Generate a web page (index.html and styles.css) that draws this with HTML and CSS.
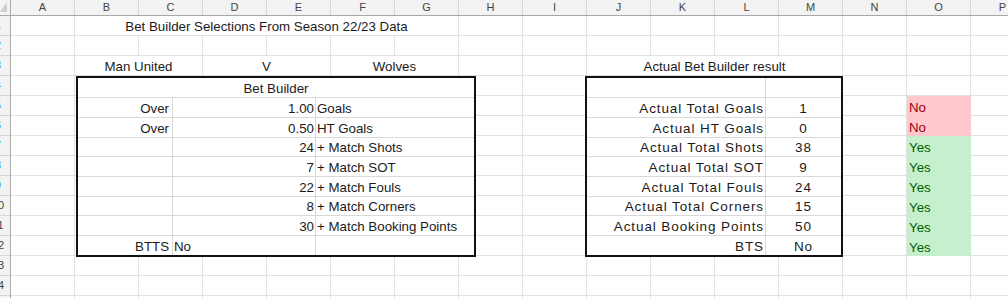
FILE: index.html
```html
<!DOCTYPE html>
<html>
<head>
<meta charset="utf-8">
<title>Bet Builder</title>
<link rel="stylesheet" href="styles.css">
</head>
<body>
<div class="sheet">
  <div class="corner"><svg width="10" height="15" viewBox="0 0 10 15"><polygon points="0,12 7,12 7,2" fill="#cfcfcf"/></svg></div>
  <div class="colheads">
    <div class="ch">A</div><div class="ch">B</div><div class="ch">C</div><div class="ch">D</div>
    <div class="ch">E</div><div class="ch">F</div><div class="ch">G</div><div class="ch">H</div>
    <div class="ch">I</div><div class="ch">J</div><div class="ch">K</div><div class="ch">L</div>
    <div class="ch">M</div><div class="ch">N</div><div class="ch">O</div><div class="ch">P</div>
  </div>
  <div class="rowheads">
    <div class="rh blue"><span>1</span></div>
    <div class="rh blue"><span>2</span></div>
    <div class="rh blue"><span>3</span></div>
    <div class="rh blue"><span>4</span></div>
    <div class="rh blue"><span>5</span></div>
    <div class="rh blue"><span>6</span></div>
    <div class="rh blue"><span>7</span></div>
    <div class="rh blue"><span>8</span></div>
    <div class="rh blue"><span>9</span></div>
    <div class="rh"><span>10</span></div>
    <div class="rh"><span>11</span></div>
    <div class="rh"><span>12</span></div>
    <div class="rh"><span>13</span></div>
    <div class="rh"><span>14</span></div>
  </div>
  <div class="cells">
    <div class="cell merge title">Bet Builder Selections From Season 22/23 Data</div>
    <div class="cell merge home">Man United</div>
    <div class="cell merge vs">V</div>
    <div class="cell merge away">Wolves</div>
    <div class="cell merge acthead">Actual Bet Builder result</div>

    <div class="box box1">
      <div class="b span3">Bet Builder</div>
      <div class="b lab">Over</div><div class="b num">1.00</div><div class="b txt">Goals</div>
      <div class="b lab">Over</div><div class="b num">0.50</div><div class="b txt">HT Goals</div>
      <div class="b lab"></div><div class="b num">24</div><div class="b txt">+ Match Shots</div>
      <div class="b lab"></div><div class="b num">7</div><div class="b txt">+ Match SOT</div>
      <div class="b lab"></div><div class="b num">22</div><div class="b txt">+ Match Fouls</div>
      <div class="b lab"></div><div class="b num">8</div><div class="b txt">+ Match Corners</div>
      <div class="b lab"></div><div class="b num">30</div><div class="b txt">+ Match Booking Points</div>
      <div class="b lab">BTTS</div><div class="b txt">No</div><div class="b txt"></div>
    </div>

    <div class="box box2">
      <div class="b alab"></div><div class="b aval"></div>
      <div class="b alab">Actual Total Goals</div><div class="b aval">1</div>
      <div class="b alab">Actual HT Goals</div><div class="b aval">0</div>
      <div class="b alab">Actual Total Shots</div><div class="b aval">38</div>
      <div class="b alab">Actual Total SOT</div><div class="b aval">9</div>
      <div class="b alab">Actual Total Fouls</div><div class="b aval">24</div>
      <div class="b alab">Actual Total Corners</div><div class="b aval">15</div>
      <div class="b alab">Actual Booking Points</div><div class="b aval">50</div>
      <div class="b alab">BTS</div><div class="b aval">No</div>
    </div>

    <div class="flags">
      <div class="flag no">No</div>
      <div class="flag no">No</div>
      <div class="flag yes">Yes</div>
      <div class="flag yes">Yes</div>
      <div class="flag yes">Yes</div>
      <div class="flag yes">Yes</div>
      <div class="flag yes">Yes</div>
      <div class="flag yes">Yes</div>
    </div>
  </div>
</div>
</body>
</html>
```

FILE: styles.css
```css
* { box-sizing: border-box; }
html, body { margin: 0; padding: 0; background: #fff; overflow: hidden; }
body {
  width: 1008px;
  height: 298px;
  font-family: "Liberation Sans", Arial, sans-serif;
  color: #1b1b1b;
}
.sheet {
  display: grid;
  grid-template-columns: 11px 997px;
  grid-template-rows: 16px 282px;
  overflow: hidden;
}
.corner {
  background: #f3f3f3;
  border-right: 1px solid #a8a8a8;
  border-bottom: 1px solid #a8a8a8;
}
.corner svg { display: block; }
.colheads {
  display: flex;
  background: #f3f3f3;
  border-bottom: 1px solid #a8a8a8;
  overflow: hidden;
}
.ch {
  flex: 0 0 64px;
  border-right: 1px solid #d6d6d6;
  text-align: center;
  font-size: 11px;
  line-height: 15px;
  color: #444;
}
.rowheads {
  display: flex;
  flex-direction: column;
  background: #f3f3f3;
  border-right: 1px solid #a8a8a8;
  overflow: hidden;
}
.rh {
  flex: 0 0 20px;
  border-bottom: 1px solid #d6d6d6;
  overflow: hidden;
  font-size: 11px;
  line-height: 19px;
  color: #444;
}
.rh span {
  display: block;
  width: 30px;
  margin-left: -17px;
  text-align: center;
}
.rh.blue { color: #4b9be0; }

.cells {
  display: grid;
  grid-template-columns: repeat(16, 64px);
  grid-template-rows: repeat(14, 20px) 2px;
  overflow: hidden;
  background-image:
    linear-gradient(to left, #e1e1e1 1px, transparent 1px),
    linear-gradient(to top, #e1e1e1 1px, transparent 1px);
  background-size: 64px 100%, 100% 20px;
  font-size: 13.3px;
}
.cell {
  display: flex;
  align-items: flex-end;
  padding-bottom: 1px;
  line-height: 15px;
  white-space: nowrap;
}
.merge {
  background: #fff;
  border-right: 1px solid #e1e1e1;
  border-bottom: 1px solid #e1e1e1;
  justify-content: center;
}
.title { grid-column: 2 / 8; grid-row: 1; }
.home { grid-column: 2 / 4; grid-row: 3; }
.vs { grid-column: 4 / 6; grid-row: 3; }
.away { grid-column: 6 / 8; grid-row: 3; }
.acthead { grid-column: 10 / 14; grid-row: 3; }

.box {
  display: grid;
  grid-row: 4 / 13;
  justify-self: start;
  align-self: start;
  height: 181px;
  border: 2px solid #111;
  background: #d9d9d9;
  gap: 1px;
  grid-template-rows: 19px 19px 19px 18px 19px 19px 18px 19px 19px;
}
.box1 {
  grid-column: 2 / 9;
  width: 400px;
  margin-left: 1px;
  grid-template-columns: 94px 142px 158px;
}
.box2 {
  grid-column: 10 / 14;
  width: 258px;
  margin-left: -2px;
  grid-template-columns: 178px 75px;
  font-size: 13.5px;
  letter-spacing: 0.9px;
}
.b {
  background: #fff;
  display: flex;
  align-items: flex-end;
  line-height: 15px;
  padding-bottom: 1px;
  white-space: nowrap;
}
.span3 { grid-column: 1 / -1; justify-content: center; }
.lab { justify-content: flex-end; padding-right: 3px; }
.num { justify-content: flex-end; padding-right: 1px; }
.txt { padding-left: 1px; }
.alab { justify-content: flex-end; padding-right: 1px; }
.aval { justify-content: center; }

.flags {
  grid-column: 15;
  grid-row: 5 / 13;
  display: flex;
  flex-direction: column;
}
.flag {
  flex: 0 0 20px;
  display: flex;
  align-items: flex-end;
  padding-left: 2px;
  padding-bottom: 1px;
  line-height: 15px;
}
.no { background: #ffc7ce; color: #9c0006; }
.yes { background: #c6efce; color: #006100; }
```
